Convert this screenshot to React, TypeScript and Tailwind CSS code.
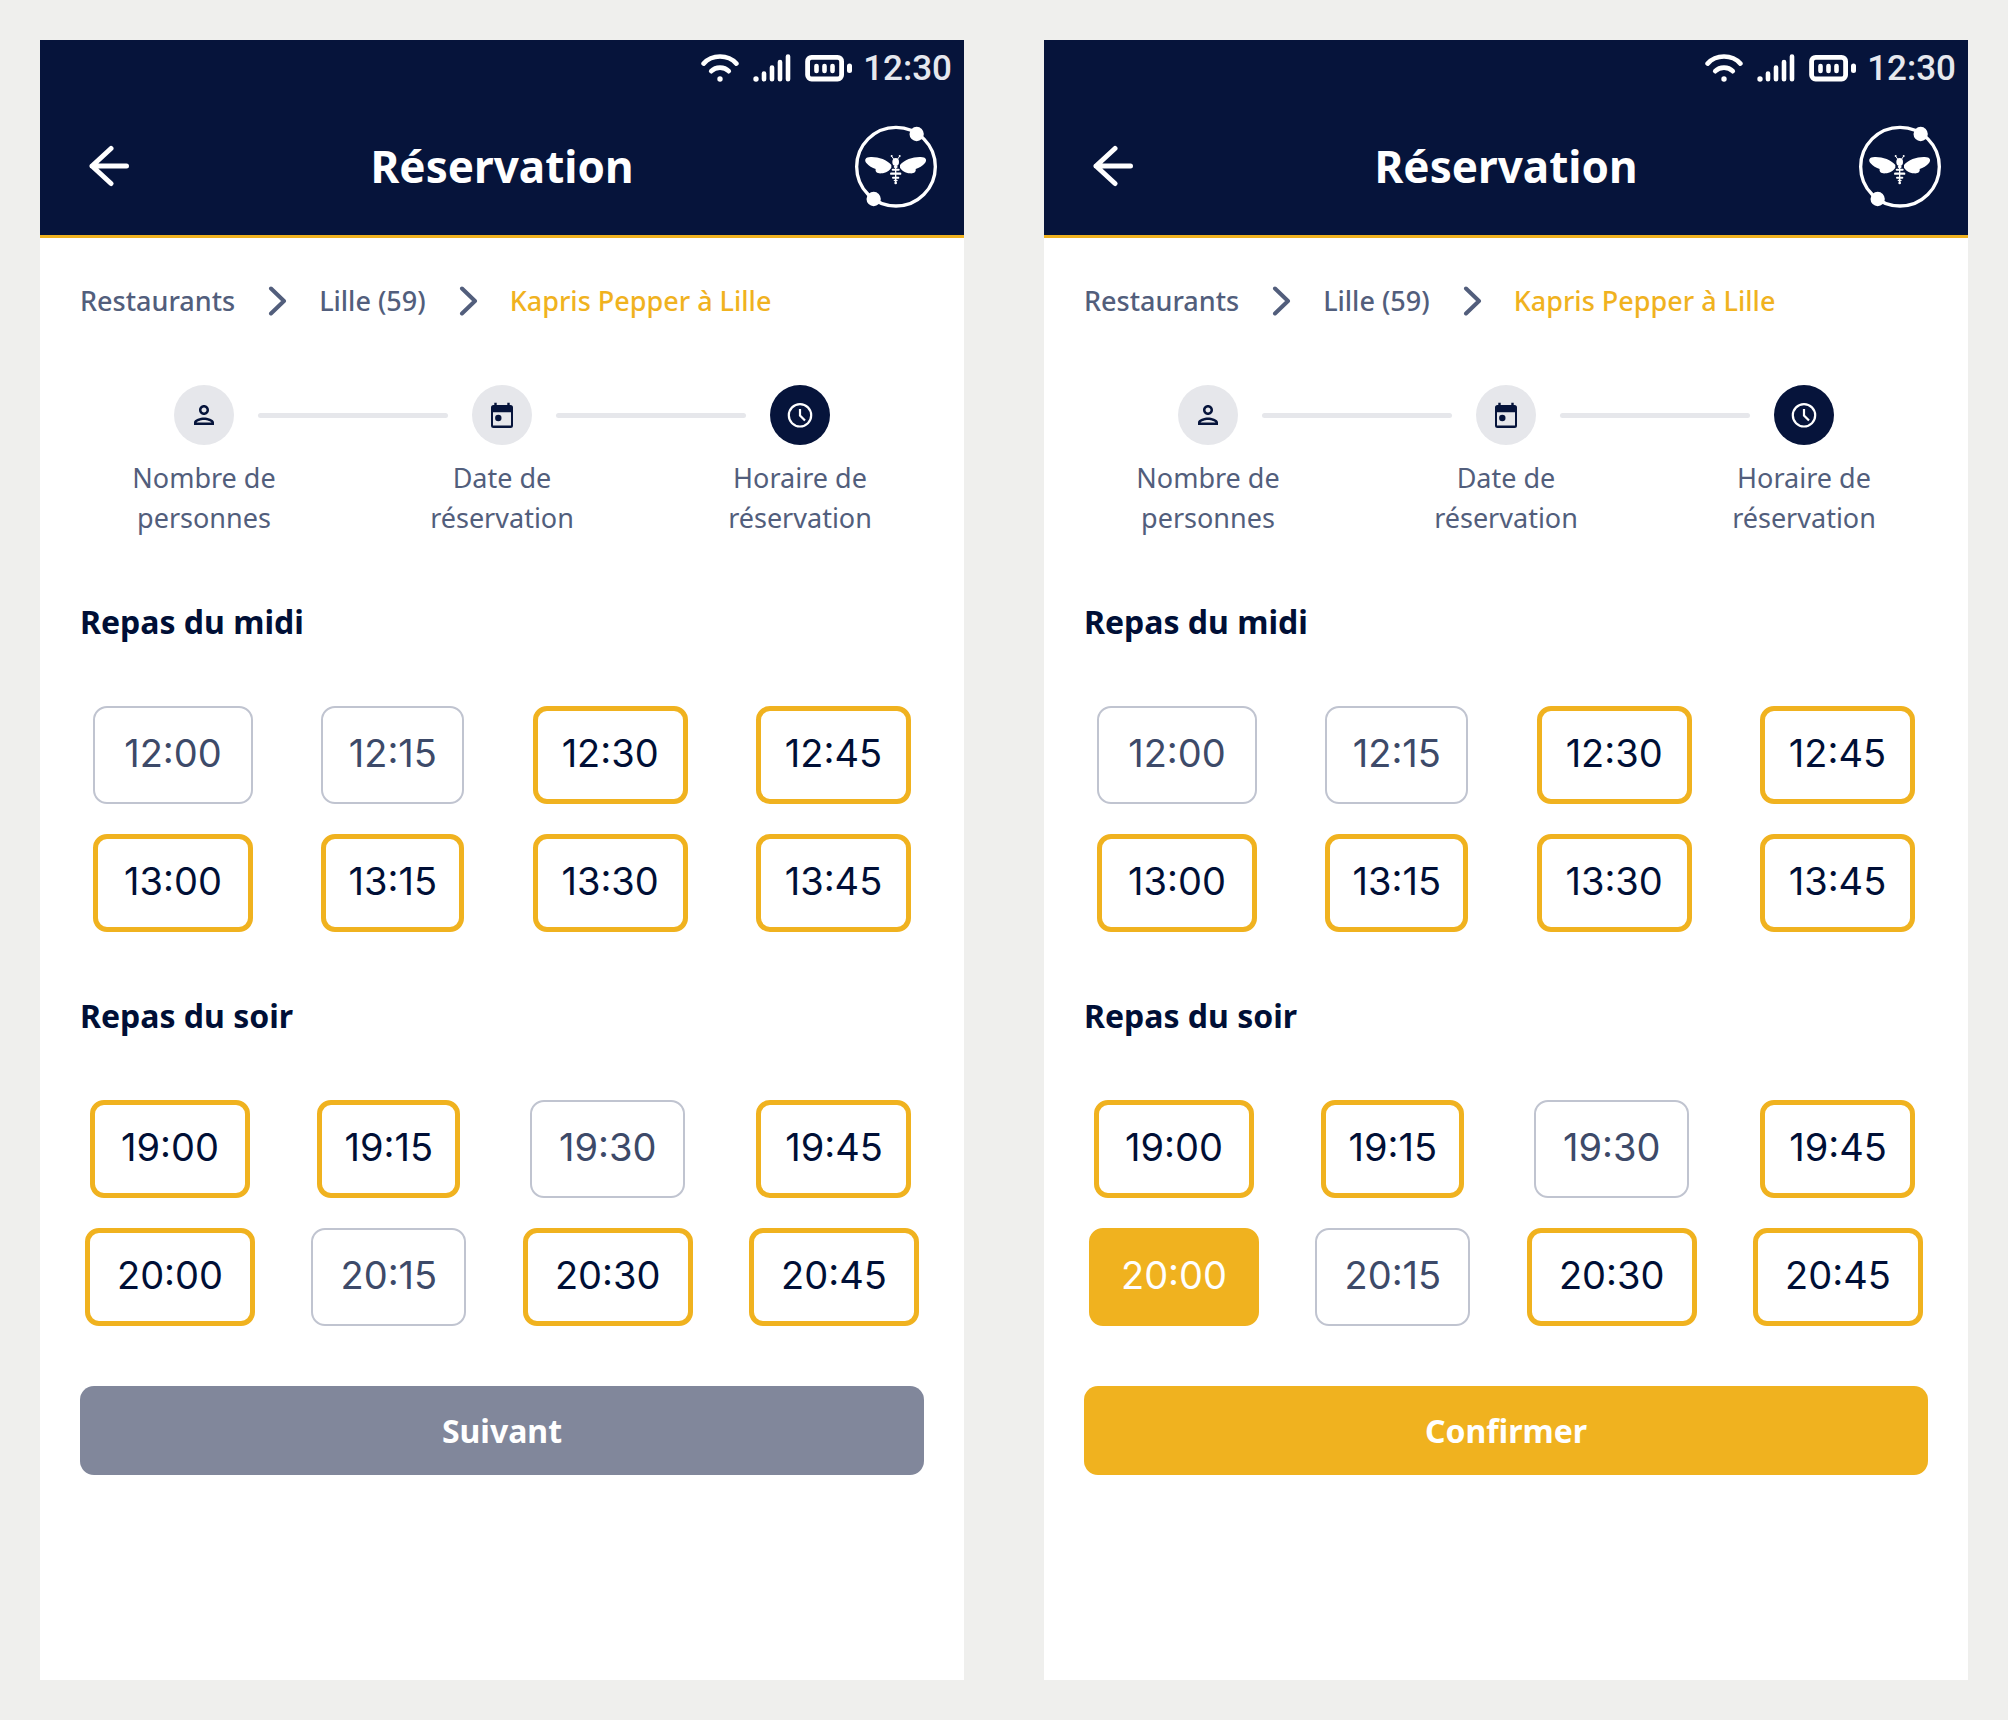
import { MdOutlinePerson } from "react-icons/md";

type SlotState = "available" | "full" | "selected";
type SlotSize = "sm" | "md" | "lg" | "xl";
type Slot = { time: string; state: SlotState; size: SlotSize };

const midi: Slot[] = [
  { time: "12:00", state: "full", size: "lg" },
  { time: "12:15", state: "full", size: "sm" },
  { time: "12:30", state: "available", size: "md" },
  { time: "12:45", state: "available", size: "md" },
  { time: "13:00", state: "available", size: "lg" },
  { time: "13:15", state: "available", size: "sm" },
  { time: "13:30", state: "available", size: "md" },
  { time: "13:45", state: "available", size: "md" },
];

const soir: Slot[] = [
  { time: "19:00", state: "available", size: "lg" },
  { time: "19:15", state: "available", size: "sm" },
  { time: "19:30", state: "full", size: "md" },
  { time: "19:45", state: "available", size: "md" },
  { time: "20:00", state: "available", size: "xl" },
  { time: "20:15", state: "full", size: "md" },
  { time: "20:30", state: "available", size: "xl" },
  { time: "20:45", state: "available", size: "xl" },
];

function WifiIcon() {
  return (
    <svg className="h-7 w-[38px]" viewBox="0 0 38 28" fill="none" stroke="white" strokeWidth="4.6" strokeLinecap="round" aria-hidden="true">
      <path d="M2.6 9.6C11 .2 27 .2 35.4 9.6" />
      <path d="M10.2 17.2c4.6-4.8 13-4.8 17.6 0" />
      <circle cx="19" cy="25" r="2.7" fill="white" stroke="none" />
    </svg>
  );
}

function SignalIcon() {
  return (
    <svg className="h-7 w-[38px]" viewBox="0 0 38 28" fill="none" stroke="white" strokeWidth="4.6" strokeLinecap="round" aria-hidden="true">
      <circle cx="3" cy="25" r="2.7" fill="white" stroke="none" />
      <path d="M11 19.5v5.8M19 13.5v11.8M27 8v17.3M35 2.5v22.8" />
    </svg>
  );
}

function BatteryIcon() {
  return (
    <svg className="h-7 w-12" viewBox="0 0 48 28" fill="none" stroke="white" strokeLinecap="round" aria-hidden="true">
      <rect x="2.6" y="3.4" width="34" height="21.6" rx="4" strokeWidth="4.8" />
      <path d="M11.5 12v5M19.5 12v5M27.5 12v5" strokeWidth="4.6" />
      <path d="M44.5 12v4.6" strokeWidth="5" />
    </svg>
  );
}

function BeeLogo() {
  const wing =
    "M154 165C142 149 113 140 92 141C76 141 72 150 79 159C86 168 97 174 107 177C105 186 112 191 124 190C138 189 149 181 154 173Z";
  return (
    <svg className="size-[86px]" viewBox="39 39 258 258" fill="white" aria-hidden="true">
      <circle cx="168" cy="170" r="118" fill="none" stroke="white" strokeWidth="10" />
      <circle cx="230" cy="72" r="21.5" />
      <circle cx="101" cy="267" r="21.5" />
      <path d={wing} />
      <path d={wing} transform="translate(334 0) scale(-1 1)" />
      <path d="M163 150l-7-10M171 150l7-10" stroke="white" strokeWidth="3" />
      <circle cx="155" cy="138" r="3" />
      <circle cx="179" cy="138" r="3" />
      <ellipse cx="167" cy="156" rx="10" ry="12" />
      <path d="M165 160h4v58h-4z" />
      <ellipse cx="167" cy="171" rx="6" ry="3.5" />
      <rect x="155" y="176" width="24" height="6" rx="3" />
      <rect x="150" y="187.5" width="34" height="7" rx="3.5" />
      <rect x="156" y="200" width="22" height="6" rx="3" />
      <rect x="161" y="209" width="12" height="5" rx="2.5" />
      <circle cx="167" cy="219" r="4" />
    </svg>
  );
}

function Chevron() {
  return (
    <svg className="h-[30px] w-5 shrink-0" viewBox="0 0 20 30" fill="none" stroke="#525e7c" strokeWidth="4" strokeLinecap="round" strokeLinejoin="round" aria-hidden="true">
      <path d="M4 2.5L17 15L4 27.5" />
    </svg>
  );
}

function CalendarIcon() {
  return (
    <svg className="size-[30px]" viewBox="0 0 30 30" fill="#06143b" aria-hidden="true">
      <path fillRule="evenodd" d="M6.5 5h17A2.5 2.5 0 0 1 26 7.5v18a2.5 2.5 0 0 1-2.5 2.5h-17A2.5 2.5 0 0 1 4 25.5v-18A2.5 2.5 0 0 1 6.5 5ZM6 12.3v13.2h18V12.3Z" />
      <path d="M7.3 2.7h2.4V6H7.3ZM20.3 2.7h2.4V6h-2.4Z" />
      <circle cx="11.3" cy="18" r="3.2" />
    </svg>
  );
}

function ClockIcon() {
  return (
    <svg className="size-[30px]" viewBox="0 0 30 30" fill="none" stroke="white" strokeWidth="2.2" aria-hidden="true">
      <circle cx="15" cy="15.3" r="11.2" />
      <path d="M15 9v6.5l5 5" />
    </svg>
  );
}

const steps = [
  { label: ["Nombre de", "personnes"], icon: <MdOutlinePerson size={30} /> },
  { label: ["Date de", "réservation"], icon: <CalendarIcon /> },
  { label: ["Horaire de", "réservation"], icon: <ClockIcon /> },
];

function Steps() {
  return (
    <ol className="grid grid-cols-3 px-[15px]">
      {steps.map((step, i) => {
        const current = i === steps.length - 1;
        return (
          <li key={i} aria-current={current ? "step" : undefined} className="flex flex-col gap-[13px]">
            <div className="flex items-center gap-6">
              <span className={i > 0 ? "h-[5px] flex-1 rounded-r-full bg-[#e6e7eb]" : "flex-1"} />
              <span
                className={
                  current
                    ? "flex size-[60px] items-center justify-center rounded-full bg-[#06143b]"
                    : "flex size-[60px] items-center justify-center rounded-full bg-[#e6e7eb] text-[#06143b]"
                }
              >
                {step.icon}
              </span>
              <span className={current ? "flex-1" : "h-[5px] flex-1 rounded-l-full bg-[#e6e7eb]"} />
            </div>
            <p className="text-center text-[27px] leading-10 text-[#525e7c]">
              {step.label[0]}
              <br />
              {step.label[1]}
            </p>
          </li>
        );
      })}
    </ol>
  );
}

const slotStyles: Record<SlotState, string> = {
  available: "border-5 border-[#f0b21f] text-[#000f36]",
  full: "border-2 border-[#c0c4d0] text-[#3d4a69]",
  selected: "border-5 border-[#f0b21f] bg-[#f0b21f] text-white",
};

const slotWidths: Record<SlotSize, string> = {
  sm: "w-[143px]",
  md: "w-[155px]",
  lg: "w-[160px]",
  xl: "w-[170px]",
};

function Slots({ title, slots, selected, inset }: { title: string; slots: Slot[]; selected?: string; inset: string }) {
  return (
    <section className="flex flex-col gap-16 px-10">
      <h2 className="text-[32px] leading-10 font-bold text-[#000f36]">{title}</h2>
      <div className={`grid grid-cols-[repeat(4,auto)] justify-between justify-items-center gap-y-[30px] ${inset}`}>
        {slots.map(({ time, state, size }) => {
          const shown = time === selected ? "selected" : state;
          return (
            <button
              key={time}
              type="button"
              disabled={shown === "full"}
              aria-pressed={shown === "selected"}
              className={`h-[98px] rounded-[14px] pb-1 font-[Inter,sans-serif] text-[38px] ${slotWidths[size]} ${slotStyles[shown]}`}
            >
              {time}
            </button>
          );
        })}
      </div>
    </section>
  );
}

function Phone({ selected }: { selected?: string }) {
  return (
    <main className="flex min-w-0 flex-1 flex-col bg-white">
      <header className="border-b-3 border-[#f0b21f] bg-[#06143b] text-white">
        <div className="flex h-14 items-center justify-end gap-[10px] pr-3">
          <div className="flex items-center gap-[14px]">
            <WifiIcon />
            <SignalIcon />
            <BatteryIcon />
          </div>
          <span className="font-[Roboto,sans-serif] text-[35px] leading-none font-medium text-[#e6e8ee]">12:30</span>
        </div>
        <div className="grid h-[139px] grid-cols-[1fr_auto_1fr] items-center px-[25px]">
          <button type="button" aria-label="Retour" className="ml-6 justify-self-start">
            <svg className="size-[42px]" viewBox="0 0 42 42" fill="none" stroke="white" strokeWidth="5" strokeLinecap="round" strokeLinejoin="round" aria-hidden="true">
              <path d="M22 3.5L3 21L22 38.5M3 21H37.5" />
            </svg>
          </button>
          <h1 className="text-[44px] leading-[60px] font-bold">Réservation</h1>
          <div className="justify-self-end">
            <BeeLogo />
          </div>
        </div>
      </header>

      <div className="flex flex-col gap-16 pt-[43px]">
        <nav aria-label="Fil d'Ariane" className="flex items-center gap-8 px-10 text-[27px] leading-10 font-medium text-[#525e7c]">
          <a href="#restaurants">Restaurants</a>
          <Chevron />
          <a href="#lille">Lille (59)</a>
          <Chevron />
          <a href="#kapris" aria-current="page" className="text-[#f0b21f]">
            Kapris Pepper à Lille
          </a>
        </nav>
        <Steps />
        <Slots title="Repas du midi" slots={midi} inset="px-[13px]" />
        <Slots title="Repas du soir" slots={soir} selected={selected} inset="px-[5px]" />
      </div>

      <div className="flex px-10 pt-[60px] pb-10">
        <button
          type="button"
          disabled={!selected}
          className="h-[89px] flex-1 rounded-[14px] bg-[#f0b21f] text-[32px] font-bold text-white disabled:bg-[#81879b]"
        >
          {selected ? "Confirmer" : "Suivant"}
        </button>
      </div>
    </main>
  );
}

export default function App() {
  return (
    <div className="flex min-h-screen gap-20 bg-[#efefed] p-10 font-['Noto_Sans',sans-serif]">
      <Phone />
      <Phone selected="20:00" />
    </div>
  );
}
